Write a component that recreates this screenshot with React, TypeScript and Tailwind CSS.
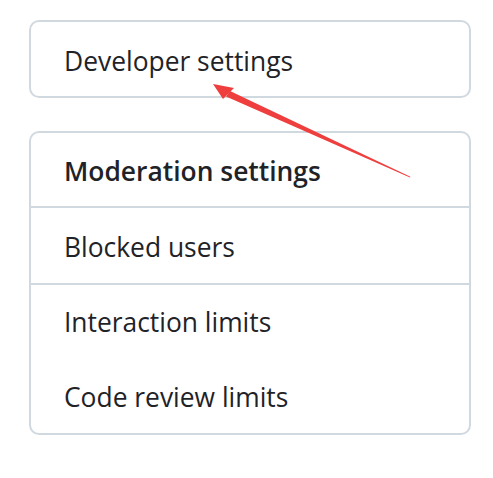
import React from "react";

const items = ["Blocked users"];

export default function App() {
  return (
    <div
      className="relative w-[493px] h-[478px] bg-white text-[#1f2328]"
      style={{ fontFamily: '"Open Sans", "Noto Sans", sans-serif' }}
    >
      <div className="flex flex-col gap-[33px] pt-[20px] pl-[29px] w-[471px]">
        {/* Developer settings */}
        <div className="h-[78px] flex items-center pl-[33px] pt-[5px] border-2 border-[#d1d9e0] rounded-[10px] text-[26.4px]">
          Developer settings
        </div>

        {/* Moderation settings */}
        <div className="flex flex-col border-2 border-[#d1d9e0] rounded-[10px] text-[26.4px]">
          <div className="h-[75px] flex items-center pl-[33px] pt-[4px] font-semibold border-b-2 border-[#d1d9e0]">
            Moderation settings
          </div>
          {items.map((t) => (
            <div key={t} className="h-[77px] flex items-center pl-[33px] pt-[4px] border-b-2 border-[#d1d9e0]">
              {t}
            </div>
          ))}
          <div className="h-[76px] flex items-center pl-[33px]">Interaction limits</div>
          <div className="h-[72px] flex items-center pl-[33px] pt-[2px]">Code review limits</div>
        </div>
      </div>

      {/* annotation arrow */}
      <svg className="absolute left-0 top-0 pointer-events-none" width="493" height="478" viewBox="0 0 493 478">
        <polygon points="213,84 234,88 223,99" fill="#ef3e3e" />
        <polygon points="230,91 226,96.5 410,177.5 410.4,176.7" fill="#ef3e3e" />
      </svg>
    </div>
  );
}
